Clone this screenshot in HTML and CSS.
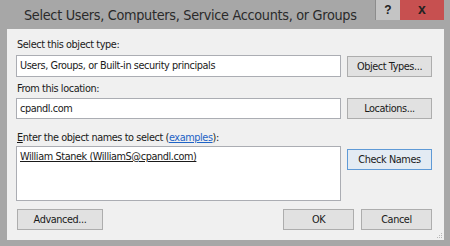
FILE: index.html
```html
<!DOCTYPE html>
<html>
<head>
<meta charset="utf-8">
<link rel="stylesheet" href="styles.css">
</head>
<body>
<div class="window">
  <div class="titlebar">
    <div class="title">Select Users, Computers, Service Accounts, or Groups</div>
    <div class="caption">
      <div class="cap-btn help">?</div>
      <div class="cap-btn close">x</div>
    </div>
  </div>
  <div class="client">
    <div class="label l1">Select this object type:</div>
    <div class="row r1">
      <div class="field">Users, Groups, or Built-in security principals</div>
      <div class="btn">Object Types...</div>
    </div>
    <div class="label l2">From this location:</div>
    <div class="row r2">
      <div class="field">cpandl.com</div>
      <div class="btn">Locations...</div>
    </div>
    <div class="label l3"><span class="u">E</span>nter the object names to select (<span class="link">examples</span>):</div>
    <div class="row r3">
      <div class="area"><span class="name">William Stanek (WilliamS@cpandl.com)</span></div>
      <div class="btn default">Check Names</div>
    </div>
    <div class="bottom">
      <div class="btn adv">Advanced...</div>
      <div class="spacer"></div>
      <div class="btn small">OK</div>
      <div class="btn small">Cancel</div>
    </div>
    <svg class="grip" width="7" height="7" viewBox="0 0 7 7">
      <rect x="5" y="1" width="1" height="1" fill="#b8b8b8"/>
      <rect x="3" y="3" width="1" height="1" fill="#b8b8b8"/>
      <rect x="5" y="3" width="1" height="1" fill="#b8b8b8"/>
      <rect x="1" y="5" width="1" height="1" fill="#b8b8b8"/>
      <rect x="3" y="5" width="1" height="1" fill="#b8b8b8"/>
      <rect x="5" y="5" width="1" height="1" fill="#b8b8b8"/>
    </svg>
  </div>
</div>
</body>
</html>
```
FILE: styles.css
```css
html, body {
  margin: 0;
  padding: 0;
}
body {
  width: 450px;
  height: 246px;
  overflow: hidden;
  font-family: "DejaVu Sans Condensed", "Liberation Sans", sans-serif;
  font-size: 10.8px;
  letter-spacing: -0.4px;
  color: #1a1a1a;
}
.window {
  width: 450px;
  height: 246px;
  background: #a7a7a7;
  display: flex;
  flex-direction: column;
}
.titlebar {
  height: 29px;
  display: flex;
  align-items: flex-start;
}
.title {
  flex: 1;
  padding-left: 24px;
  padding-top: 5px;
  font-size: 14.3px;
  letter-spacing: -0.3px;
  line-height: 20px;
  white-space: nowrap;
  color: #2a2a2a;
}
.caption {
  display: flex;
  margin-right: 6px;
}
.cap-btn {
  height: 20px;
  display: flex;
  align-items: center;
  justify-content: center;
  font-family: "Liberation Sans", sans-serif;
  font-weight: bold;
  letter-spacing: 0;
  color: #222;
  box-sizing: border-box;
}
.help {
  width: 25px;
  background: #c4c4c4;
  border-left: 1px solid #8c8c8c;
  font-size: 12px;
}
.close {
  width: 44px;
  background: #c75050;
  font-size: 14px;
  padding-bottom: 2px;
}
.client {
  position: relative;
  flex: 1;
  margin: 0 6px 6px 7px;
  background: #f0f0f0;
  padding: 0 12px 0 9px;
  display: flex;
  flex-direction: column;
}
.label {
  line-height: 14px;
  padding-left: 1px;
  white-space: nowrap;
}
.l1 { margin-top: 9px; margin-bottom: 3px; }
.l2 { margin-top: 5px; margin-bottom: 2px; }
.l3 { margin-top: 12px; margin-bottom: 1px; }
.u { text-decoration: underline; }
.link { color: #1f63c6; text-decoration: underline; }
.row {
  display: grid;
  grid-template-columns: 1fr 85px;
  column-gap: 6px;
  align-items: start;
}
.field {
  height: 22px;
  box-sizing: border-box;
  border: 1px solid #abadb3;
  background: #fff;
  padding: 3px 3px;
  line-height: 14px;
  white-space: nowrap;
}
.r2 .field { height: 21px; }
.btn {
  height: 21px;
  box-sizing: border-box;
  border: 1px solid #adadad;
  background: #e1e1e1;
  display: flex;
  align-items: center;
  justify-content: center;
  line-height: 14px;
  white-space: nowrap;
}
.r1 .btn { margin-top: 1px; }
.area {
  height: 55px;
  box-sizing: border-box;
  border: 1px solid #abadb3;
  background: #fff;
  padding: 3px 3px;
  line-height: 14px;
}
.name { text-decoration: underline; }
.r3 .btn { margin-top: 3px; }
.default {
  border-color: #5f9ad6;
  background: #e3ebf3;
}
.bottom {
  display: flex;
  margin-top: 8px;
  gap: 7px;
}
.adv { width: 86px; margin-left: 1px; }
.spacer { flex: 1; }
.small { width: 71px; }
.grip {
  position: absolute;
  right: 1px;
  bottom: 1px;
}
```
